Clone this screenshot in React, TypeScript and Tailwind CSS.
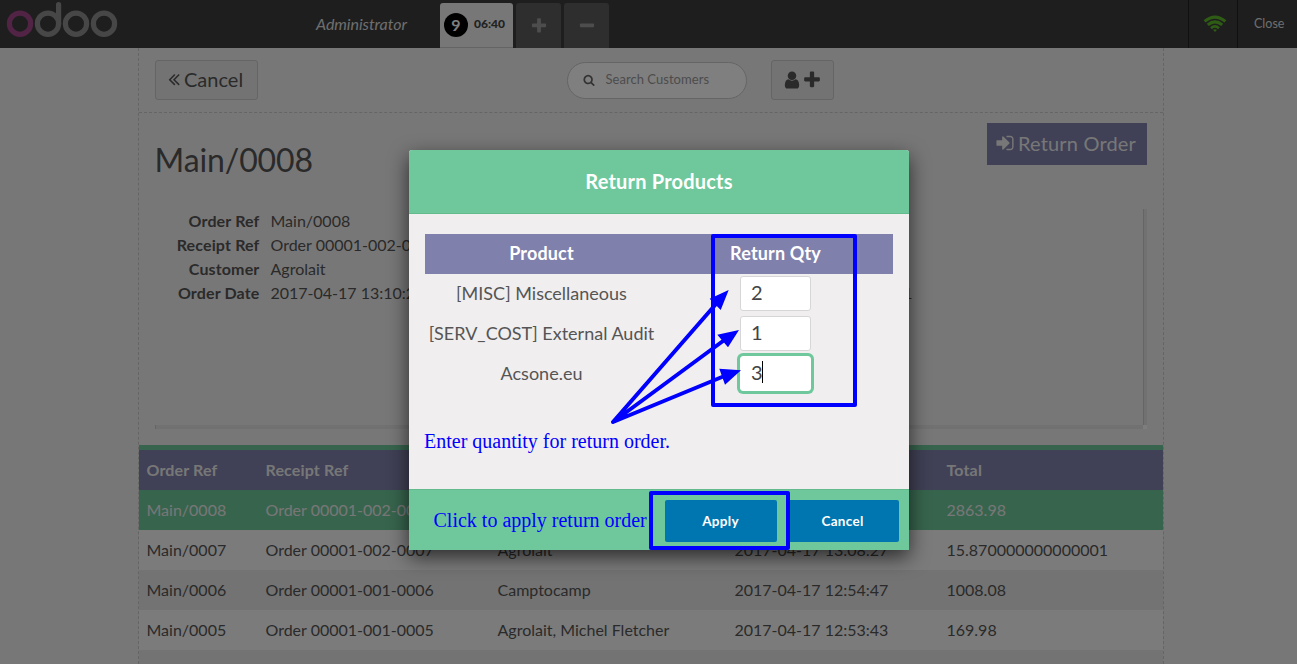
import React from 'react';

const ICONS = {
  plus: 'M1600 736v192q0 40-28 68t-68 28h-416v416q0 40-28 68t-68 28h-192q-40 0-68-28t-28-68v-416h-416q-40 0-68-28t-28-68v-192q0-40 28-68t68-28h416v-416q0-40 28-68t68-28h192q40 0 68 28t28 68v416h416q40 0 68 28t28 68z',
  minus: 'M1600 736v192q0 40-28 68t-68 28h-1216q-40 0-68-28t-28-68v-192q0-40 28-68t68-28h1216q40 0 68 28t28 68z',
  user: 'M1536 1399q0 109-62.5 187t-150.5 78h-854q-88 0-150.5-78t-62.5-187q0-85 8.5-160.5t31.5-152 58.5-131 94-89 134.5-34.5q131 128 313 128t313-128q76 0 134.5 34.5t94 89 58.5 131 31.5 152 8.5 160.5zm-256-887q0 159-112.5 271.5t-271.5 112.5-271.5-112.5-112.5-271.5 112.5-271.5 271.5-112.5 271.5 112.5 112.5 271.5z',
  search: 'M1216 832q0-185-131.5-316.5t-316.5-131.5-316.5 131.5-131.5 316.5 131.5 316.5 316.5 131.5 316.5-131.5 131.5-316.5zm512 832q0 52-38 90t-90 38q-54 0-90-38l-343-342q-179 124-399 124-143 0-273.5-55.5t-225-150-150-225-55.5-273.5 55.5-273.5 150-225 225-150 273.5-55.5 273.5 55.5 225 150 150 225 55.5 273.5q0 220-124 399l343 343q37 37 37 90z',
  back: 'M1011 1376q0 13-10 23l-50 50q-10 10-23 10t-23-10l-466-466q-10-10-10-23t10-23l466-466q10-10 23-10t23 10l50 50q10 10 10 23t-10 23l-393 393 393 393q10 10 10 23zm384 0q0 13-10 23l-50 50q-10 10-23 10t-23-10l-466-466q-10-10-10-23t10-23l466-466q10-10 23-10t23 10l50 50q10 10 10 23t-10 23l-393 393 393 393q10 10 10 23z',
  signIn: 'M1312 896q0 26-19 45l-544 544q-19 19-45 19t-45-19-19-45v-288h-448q-26 0-45-19t-19-45v-384q0-26 19-45t45-19h448v-288q0-26 19-45t45-19 45 19l544 544q19 19 19 45zm352-352v704q0 119-84.5 203.5t-203.5 84.5h-320q-13 0-22.5-9.5t-9.5-22.5q0-4-1-20t-.5-26.5 3-23.5 10-19.5 20.5-6.5h320q66 0 113-47t47-113v-704q0-66-47-113t-113-47h-312l-11.5-1-11.5-3-8-5.5-7-9-2-13.5q0-4-1-20t-.5-26.5 3-23.5 10-19.5 20.5-6.5h320q119 0 203.5 84.5t84.5 203.5z',
};

function Icon({ name, className }: { name: keyof typeof ICONS; className: string }) {
  return (
    <svg viewBox="0 0 1792 1792" fill="currentColor" className={`shrink-0 ${className}`}>
      <path d={ICONS[name]} />
    </svg>
  );
}

function Logo() {
  return (
    <svg width="112" height="40" viewBox="0 0 112 40" fill="none" strokeWidth="5.2" className="ml-1.5 shrink-0">
      <circle cx="14" cy="23.7" r="10.6" stroke="#a24689" />
      <g stroke="#8f8f8f">
        <circle cx="42" cy="23.7" r="10.6" />
        <path d="M52.6 24V4.6" strokeLinecap="round" />
        <circle cx="70" cy="23.7" r="10.6" />
        <circle cx="98" cy="23.7" r="10.6" />
      </g>
    </svg>
  );
}

function Wifi() {
  return (
    <svg width="24" height="18" viewBox="0 0 24 18" fill="none" stroke="#5fb92b" strokeWidth="3.1">
      <path d="M1.6 6.4Q12-2.2 22.4 6.4" />
      <path d="M4.8 9.9Q12 3.8 19.2 9.9" />
      <path d="M8 13.2Q12 9.6 16 13.2" strokeWidth="2.6" />
      <path d="M10 14.8Q12 13.6 14 14.8L12 17Z" fill="#5fb92b" stroke="none" />
    </svg>
  );
}

function TopBar() {
  return (
    <header className="flex h-12 bg-[#3c3c3c]">
      <Logo />
      <div className="ml-[198px] w-[124px] text-base leading-[48px] tracking-[-0.04px] text-[#ddd] italic">Administrator</div>
      <div className="flex items-end gap-[3px]">
        <div className="flex h-[45px] w-[73px] items-center rounded-t-[3px] border-b border-[#c8c8c8] bg-[#f0eeee] pl-1">
          <span className="flex size-6 items-center justify-center rounded-full bg-black text-base leading-6 font-bold text-white">9</span>
          <span className="ml-1.5 pb-[3px] text-xs font-black text-[#444]">06:40</span>
        </div>
        <div className="flex h-[45px] w-[45px] items-center justify-center rounded-t-[3px] bg-[#5c5c5c] text-[#9a9a9a]">
          <Icon name="plus" className="size-[18px]" />
        </div>
        <div className="flex h-[45px] w-[45px] items-center justify-center rounded-t-[3px] bg-[#5c5c5c] text-[#9a9a9a]">
          <Icon name="minus" className="size-[18px]" />
        </div>
      </div>
      <div className="ml-auto flex w-[49px] items-center justify-center border-l border-[#202020] pl-1">
        <Wifi />
      </div>
      <div className="w-[60px] border-l border-[#202020] pl-4 text-[12.5px] leading-[48px] text-[#ddd]">Close</div>
    </header>
  );
}

const details = [
  ['Order Ref', 'Main/0008'],
  ['Receipt Ref', 'Order 00001-002-0008'],
  ['Customer', 'Agrolait'],
  ['Order Date', '2017-04-17 13:10:21'],
];

const orders = [
  ['Main/0008', 'Order 00001-002-0008', 'Agrolait', '2017-04-17 13:10:21', '2863.98'],
  ['Main/0007', 'Order 00001-002-0007', 'Agrolait', '2017-04-17 13:08:27', '15.870000000000001'],
  ['Main/0006', 'Order 00001-001-0006', 'Camptocamp', '2017-04-17 12:54:47', '1008.08'],
  ['Main/0005', 'Order 00001-001-0005', 'Agrolait, Michel Fletcher', '2017-04-17 12:53:43', '169.98'],
  ['', '', '', '', ''],
];
const rowColors = ['bg-[#6ec89b] text-[#eee]', 'bg-[#f7f7f7]', 'bg-[#e6e6e6]', 'bg-[#f7f7f7]', 'bg-[#e6e6e6]'];
const columns = 'grid h-10 grid-cols-[119px_232px_237px_212px_224px] items-center *:pl-[7.5px]';

function OrderScreen() {
  return (
    <main className="ml-[138px] h-[616px] w-[1026px] overflow-hidden border-x border-dashed border-[#cbcbcb]">
      <div className="flex h-[65px] items-center border-b border-dashed border-[#cbcbcb] pl-4">
        <div className="flex h-10 w-[103px] items-center rounded-[3px] border border-[#cacaca] bg-[#e6e6e6] pb-0.5 pl-2 text-xl">
          <Icon name="back" className="size-5" />
          <span>Cancel</span>
        </div>
        <div className="ml-[309px] flex h-[37px] w-[180px] items-center rounded-full border border-[#cacaca] bg-white pl-[15px] text-[13px] text-[#999]">
          <Icon name="search" className="size-3 text-[#666]" />
          <span className="ml-[10.5px] tracking-[0.04px]">Search Customers</span>
        </div>
        <div className="ml-6 flex h-10 w-[63px] items-center justify-center rounded-[3px] border border-[#cacaca] bg-[#e6e6e6] pr-0.5 pb-px">
          <Icon name="user" className="size-5" />
          <Icon name="plus" className="size-5" />
        </div>
      </div>
      <section className="h-[332px] px-4">
        <div className="flex h-24 items-start justify-between">
          <h1 className="mt-[23px] -ml-[0.5px] text-[32px] leading-12 tracking-[-0.1px]">Main/0008</h1>
          <div className="mt-2.5 flex h-[42px] w-40 items-center bg-[#8080ac] pb-0.5 pl-2 text-xl tracking-[0.17px] text-[#eee]">
            <Icon name="signIn" className="size-5" />
            <span className="ml-[3px]">Return Order</span>
          </div>
        </div>
        <div className="grid h-[220px] w-[992px] grid-cols-[988px_4px] grid-rows-[216px_4px]">
          <div className="flex">
            <dl className="w-[500px]">
              {details.map(([label, value]) => (
                <div key={label} className="flex h-6 text-base leading-6">
                  <dt className="w-[104.5px] text-right font-bold tracking-[0.15px]">{label}</dt>
                  <dd className="ml-[11px]">{value}</dd>
                </div>
              ))}
            </dl>
            <div className="w-[257.5px] pt-[72px] text-right text-base leading-6">1</div>
          </div>
          <div className="border-l border-[#cacaca] bg-[#e2e2e2]" />
          <div className="border-l border-[#cacaca] bg-[#e2e2e2]" />
          <div className="bg-[#fafafa]" />
        </div>
      </section>
      <section className="border-t-[5px] border-[#6ec89b]">
        <div className={`${columns} bg-[#8080ac] font-bold tracking-[0.15px] text-[#eee]`}>
          {['Order Ref', 'Receipt Ref', 'Customer', 'Order Date', 'Total'].map((h) => (
            <span key={h}>{h}</span>
          ))}
        </div>
        {orders.map((row, i) => (
          <div key={i} className={`${columns} ${rowColors[i]}`}>
            {row.map((cell, j) => (
              <span key={j}>{cell}</span>
            ))}
          </div>
        ))}
      </section>
    </main>
  );
}

const products = [
  ['[MISC] Miscellaneous', '2'],
  ['[SERV_COST] External Audit', '1'],
  ['Acsone.eu', '3'],
];

function ReturnDialog() {
  return (
    <div className="mt-[150px] ml-[409px] flex h-[400px] w-[500px] flex-col overflow-hidden rounded-t-[3px] bg-[#f0eeee] shadow-[0_7px_20px_rgba(0,0,0,0.65)]">
      <h2 className="h-16 border-b border-[#62ba8d] bg-[#6ec89b] text-center text-xl leading-[63px] font-bold tracking-[0.2px] text-white">Return Products</h2>
      <div className="flex-1 px-4 pt-5">
        <div className="grid h-10 grid-cols-[233px_235px] bg-[#8080ac] text-center text-lg leading-[38px] font-bold tracking-[0.15px] text-white">
          <span>Product</span>
          <span>Return Qty</span>
        </div>
        {products.map(([name, qty]) => (
          <div key={name} className="grid h-10 grid-cols-[233px_235px] items-center text-center text-lg text-[#555]">
            <span className="pb-0.5">{name}</span>
            <div
              className={`mt-[-1px] ml-[82px] flex h-[35px] w-[71px] items-center rounded-[3px] border bg-white pb-[3px] pl-2.5 text-xl text-[#444] ${
                qty === '3' ? 'border-white ring-3 ring-[#6ec89b]' : 'border-[#d6d6d6]'
              }`}
            >
              {qty}
              {qty === '3' && <span className="-ml-px h-[22px] w-px bg-black" />}
            </div>
          </div>
        ))}
      </div>
      <footer className="flex h-[61px] justify-end gap-2.5 border-t border-[#62ba8d] bg-[#6ec89b] pt-2.5 pr-2.5 text-center text-[13.5px] leading-[42px] font-bold tracking-[0.3px] text-white">
        <div className="h-[42px] w-28 rounded-[2px] bg-[#0076b0] pr-px">Apply</div>
        <div className="h-[42px] w-28 rounded-[2px] bg-[#0076b0] pr-px">Cancel</div>
      </footer>
    </div>
  );
}

function Annotations() {
  return (
    <div className="absolute inset-0 text-xl leading-6 text-[#0000ff] [font-family:'Liberation_Serif',serif]">
      <svg width="1297" height="664" className="absolute inset-0" fill="#0000ff">
        <g stroke="#0000ff" strokeWidth="4" strokeLinecap="round">
          <path d="M613 422L716 304M613 422L723 341M613 422L722 377" />
        </g>
        <path d="M728.7 290L709.7 298.7L720.7 310ZM739 330L717.3 334.7L728 347.3ZM741 370.3L719.3 368.7L725 384.7Z" />
      </svg>
      <div className="absolute top-[234px] left-[711px] h-[173px] w-[146px] rounded-[2px] border-4 border-[#0000ff]" />
      <div className="absolute top-[491px] left-[649px] h-[59px] w-[141px] rounded-[2px] border-4 border-[#0000ff]" />
      <p className="absolute top-[429px] left-[424px] whitespace-nowrap">Enter quantity for return order.</p>
      <p className="absolute top-[508px] left-[433.5px] whitespace-nowrap">Click to apply return order</p>
    </div>
  );
}

export default function App() {
  return (
    <div className="relative h-[664px] w-[1297px] overflow-hidden bg-[#f0eeee] text-base text-[#555] [font-family:Lato,sans-serif]">
      <TopBar />
      <OrderScreen />
      <div className="absolute inset-0 flex items-start bg-black/50">
        <ReturnDialog />
      </div>
      <Annotations />
    </div>
  );
}
